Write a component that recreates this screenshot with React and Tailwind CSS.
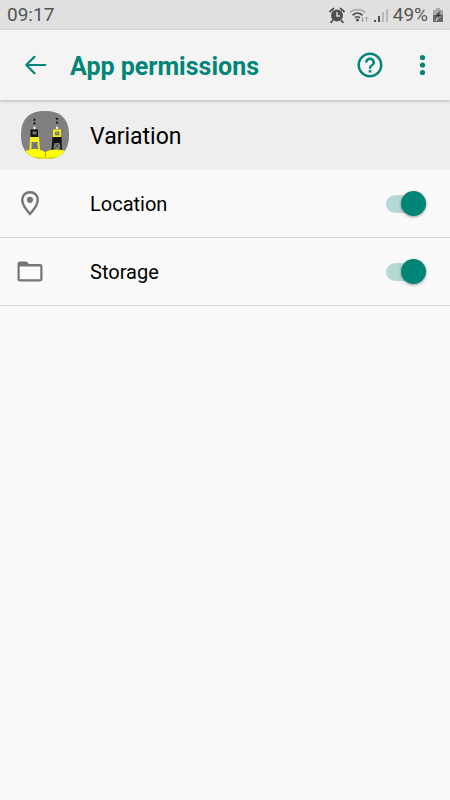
import { useState } from "react";
import { MdHelpOutline } from "react-icons/md";

const AlarmIcon = () => (
  <svg className="w-4 h-4" viewBox="0 0 16 16" fill="none">
    <circle cx="8" cy="8.5" r="6" fill="#505050" />
    <path
      d="M1 4.5L4.5 1.5M15 4.5L11.5 1.5M3.5 13.5L2 15.5M12.5 13.5L14 15.5"
      stroke="#505050"
      strokeWidth="1.8"
      strokeLinecap="round"
    />
    <path d="M8 5V9H11" stroke="#e0e0e0" strokeWidth="1.4" />
  </svg>
);

const WifiIcon = () => (
  <svg className="w-5 h-4" viewBox="0 0 20 16" fill="none">
    <path d="M1 5.5C5 1.4 12 1.4 16 5.5" stroke="#a8a8a8" strokeWidth="1.6" />
    <path
      d="M3.5 8.3C6.3 5.5 10.7 5.5 13.5 8.3M6 10.8C7.4 9.4 9.6 9.4 11 10.8"
      stroke="#555"
      strokeWidth="1.7"
    />
    <circle cx="8.5" cy="13" r="1.5" fill="#505050" />
    <path
      d="M13.5 10V14.5M12 13L13.5 14.5L15 13M17.5 14.5V10M16 11.5L17.5 10L19 11.5"
      stroke="#a0a0a0"
      strokeWidth="1"
    />
  </svg>
);

const SignalIcon = () => (
  <svg className="w-4 h-4" viewBox="0 0 16 16">
    <path d="M1 13H3V15H1Z" fill="#505050" />
    <path d="M5 9H7V15H5Z" fill="#505050" />
    <path d="M9 5H11V15H9ZM13 2H15V15H13Z" fill="#b8b8b8" />
  </svg>
);

const BatteryIcon = () => (
  <svg className="w-3 h-4" viewBox="0 0 12 16">
    <path d="M4 1H8V3H11V8H1V3H4Z" fill="#a6a6a6" />
    <path d="M1 8H11V15H1Z" fill="#6a6a6a" />
    <path d="M8.5 3.5L3 9.5H5.5L4 14L9.5 7.5H7Z" fill="#383838" />
    <path d="M5.5 9.5L4 14L8.5 8.8" stroke="#e0e0e0" strokeWidth="0.8" fill="none" />
  </svg>
);

const BackIcon = () => (
  <svg
    className="w-6 h-6"
    viewBox="0 0 24 24"
    fill="none"
    stroke="currentColor"
    strokeWidth="2.2"
    strokeLinecap="round"
    strokeLinejoin="round"
  >
    <path d="M10.5 3.8L2.3 12L10.5 20.2M2.5 12H21.3" />
  </svg>
);

const MoreIcon = () => (
  <svg className="w-6 h-6" viewBox="0 0 24 24" fill="currentColor">
    <circle cx="12.5" cy="4.5" r="2.6" />
    <circle cx="12.5" cy="12" r="2.6" />
    <circle cx="12.5" cy="19.5" r="2.6" />
  </svg>
);

const PinIcon = () => (
  <svg className="w-7 h-7" viewBox="0 0 28 28">
    <path
      d="M14 2.2C9.4 2.2 6.2 5.4 6.2 9.8C6.2 15.4 14 24 14 24C14 24 21.8 15.4 21.8 9.8C21.8 5.4 18.6 2.2 14 2.2Z"
      fill="none"
      stroke="currentColor"
      strokeWidth="2.4"
    />
    <circle cx="14" cy="9.8" r="3.1" fill="currentColor" />
  </svg>
);

const FolderIcon = () => (
  <svg className="w-7 h-7" viewBox="0 0 28 28">
    <path
      d="M4 3.5H10.5L13 6H24C25.6 6 26.5 6.9 26.5 8.5V21C26.5 22.6 25.6 23.5 24 23.5H4C2.4 23.5 1.5 22.6 1.5 21V6C1.5 4.4 2.4 3.5 4 3.5ZM3.7 8.4V21.3H24.3V8.4Z"
      fill="currentColor"
      fillRule="evenodd"
    />
  </svg>
);

// Two cardinal buoys standing on yellow hulls
const VariationIcon = () => (
  <svg className="w-12 h-12" viewBox="0 0 48 48">
    <clipPath id="squircle">
      <path d="M24 0C39 0 48 7 48 24C48 41 39 48 24 48C9 48 0 41 0 24C0 7 9 0 24 0Z" />
    </clipPath>
    <g clipPath="url(#squircle)">
      <path d="M0 0H48V48H0Z" fill="#808080" />
      <path
        d="M13.5 7L15 9.5H12ZM13.5 10.8L15 13.2H12ZM34.5 7H37.5L36 9.5ZM34.5 10.8H37.5L36 13.2Z"
        fill="#111"
      />
      <path d="M12.5 15.5H14.5V18H12.5ZM35 15.5H37V18H35Z" fill="#eee" />
      <path d="M9.5 18.5H17V26H9.5Z" fill="#111" />
      <path d="M11.5 20.5H15.5V23.5H11.5Z" fill="#777" />
      <path d="M32 18.5H40V26H32Z" fill="#f3ee16" />
      <path d="M34.5 21H38V24H34.5Z" fill="#999" stroke="#555" strokeWidth="0.6" />
      <path d="M9 26H18L19 39H8.5Z" fill="#f3ee16" />
      <path d="M10.5 31H16.5L17 38H10.5Z" fill="#808080" />
      <path d="M11 31L17 38M16.5 31L10.5 38" stroke="#555" strokeWidth="0.7" />
      <path d="M31.5 26H40.5L41 39H30.5Z" fill="#111" />
      <path d="M33 32H39L39.5 38.5H32.5Z" fill="#808080" />
      <path d="M33.5 32L39.5 38.5M39 32L32.5 38.5" stroke="#333" strokeWidth="0.7" />
      <path
        d="M0 43C3 37.5 21 37 24.5 41.5C28 37 46 37.5 48 43V48H0Z"
        fill="#ffff00"
      />
      <path d="M24.5 41.5V46" stroke="#808000" strokeWidth="0.8" />
      <path d="M3 44C12 48 36 48 45 44" stroke="#a8a820" strokeWidth="0.6" fill="none" />
    </g>
  </svg>
);

const permissions = [
  { id: "location", name: "Location", Icon: PinIcon },
  { id: "storage", name: "Storage", Icon: FolderIcon },
];

const PermissionRow = ({ id, name, Icon }) => {
  const [enabled, setEnabled] = useState(true);

  return (
    <li className="h-17 border-b border-[#d4d4d4]">
      <label htmlFor={id} className="flex h-full items-center pl-4 pr-6">
        <span className="text-[#757575]">
          <Icon />
        </span>
        <span className="ml-[46px] flex-1 text-xl text-black">{name}</span>
        <span className="relative flex w-10 h-6 items-center">
          <input
            id={id}
            type="checkbox"
            role="switch"
            checked={enabled}
            onChange={(e) => setEnabled(e.target.checked)}
            className="peer w-full h-[18px] appearance-none rounded-full bg-gray-300 checked:bg-[#b5dad5]"
          />
          <span className="absolute left-0 w-[25px] h-[25px] rounded-full bg-white shadow-[0_1px_3px_rgba(0,0,0,0.4)] peer-checked:left-auto peer-checked:right-0 peer-checked:bg-[#008577]" />
        </span>
      </label>
    </li>
  );
};

const App = () => {
  return (
    <div className="min-h-screen bg-[#fafafa] font-['Roboto',sans-serif]">
      <div className="flex h-[30px] items-center justify-between bg-[#e0e0e0] pl-[7px] pr-1.5 text-[19px] text-[#555]">
        <span>09:17</span>
        <div className="flex items-center gap-1">
          <AlarmIcon />
          <WifiIcon />
          <SignalIcon />
          <span>49%</span>
          <BatteryIcon />
        </div>
      </div>

      <header className="relative flex h-[70px] items-center bg-[#f4f4f4] pl-6 pr-4 text-[#008577] shadow-[0_1px_3px_rgba(0,0,0,0.25)]">
        <button type="button" aria-label="Back">
          <BackIcon />
        </button>
        <h1 className="ml-[22px] flex-1 pt-1 text-[25px] font-bold">
          App permissions
        </h1>
        <button type="button" aria-label="Help">
          <MdHelpOutline className="w-[30px] h-[30px]" />
        </button>
        <button type="button" aria-label="More options" className="ml-[25px]">
          <MoreIcon />
        </button>
      </header>

      <main>
        <div className="flex h-[70px] items-center bg-[#eee] pl-[21px]">
          <VariationIcon />
          <h2 className="ml-[21px] pt-1 text-[23px] text-black">Variation</h2>
        </div>
        <ul>
          {permissions.map((permission) => (
            <PermissionRow key={permission.id} {...permission} />
          ))}
        </ul>
      </main>
    </div>
  );
};

export default App;
